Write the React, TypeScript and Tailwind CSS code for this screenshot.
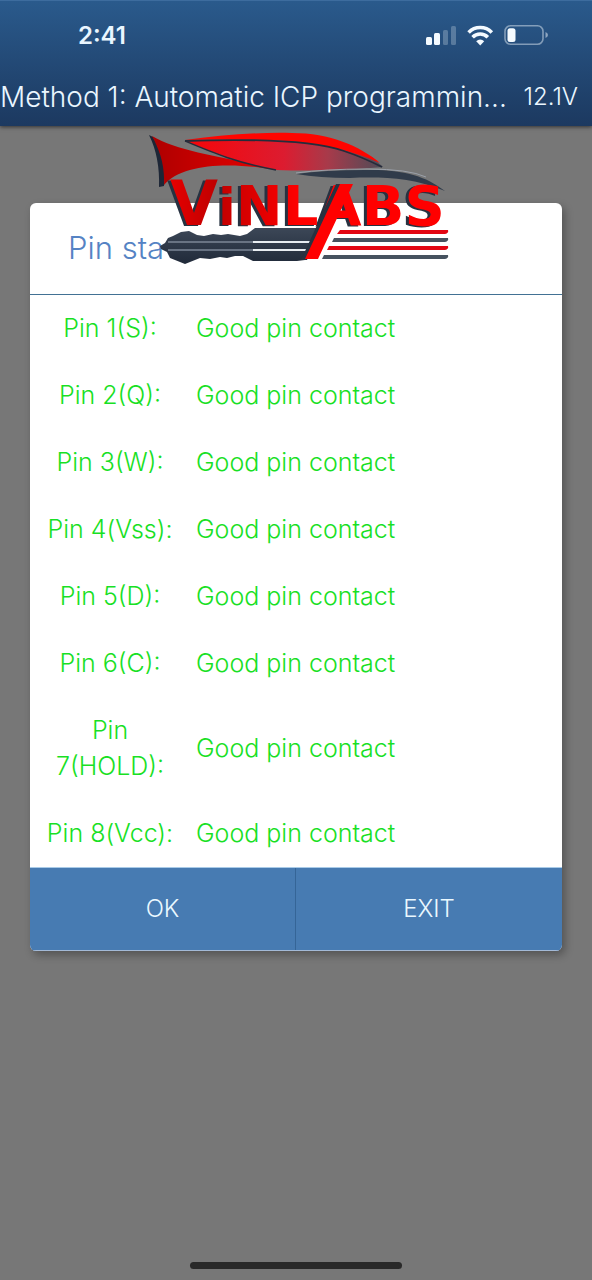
const pins = [
  { label: 'Pin 1(S):', status: 'Good pin contact' },
  { label: 'Pin 2(Q):', status: 'Good pin contact' },
  { label: 'Pin 3(W):', status: 'Good pin contact' },
  { label: 'Pin 4(Vss):', status: 'Good pin contact' },
  { label: 'Pin 5(D):', status: 'Good pin contact' },
  { label: 'Pin 6(C):', status: 'Good pin contact' },
  { label: 'Pin 7(HOLD):', status: 'Good pin contact' },
  { label: 'Pin 8(Vcc):', status: 'Good pin contact' },
];

function StatusIcons() {
  return (
    <svg width="124" height="24" viewBox="0 0 124 24" aria-hidden="true">
      <g fill="#f4faff">
        <rect x="0" y="13" width="6" height="8" rx="1.5" />
        <rect x="8" y="9" width="6" height="12" rx="1.5" />
        <rect x="17" y="6" width="5" height="15" rx="1.5" opacity=".25" />
        <rect x="25" y="2" width="5" height="19" rx="1.5" opacity=".25" />
      </g>
      <g fill="none" stroke="#f4faff" strokeWidth="3.6">
        <path d="M42.6 8.4a16.2 16.2 0 0 1 23.2 0" />
        <path d="M46.6 13.2a10.6 10.6 0 0 1 15.2 0" />
      </g>
      <path d="M54.2 21.4l-4-4.2a5.7 5.7 0 0 1 8 0z" fill="#f4faff" />
      <rect x="79" y="1.8" width="38" height="18.5" rx="5.5" fill="none" stroke="#f4faff" strokeOpacity=".45" strokeWidth="1.6" />
      <path d="M119.5 8v6q2.5-1 2.5-3t-2.5-3z" fill="#f4faff" opacity=".5" />
      <rect x="81.5" y="4.2" width="8" height="13.8" rx="2.5" fill="#f4faff" />
    </svg>
  );
}

function BrandLogo() {
  return (
    <svg
      className="pointer-events-none absolute top-[128px] left-1/2 -translate-x-1/2"
      width="310"
      height="140"
      viewBox="141 128 310 140"
      role="img"
      aria-label="ViNLABS"
    >
      <defs>
        <linearGradient id="tail" x1="0" x2="1">
          <stop offset="0" stopColor="#ae0000" />
          <stop offset=".55" stopColor="#d00000" />
          <stop offset="1" stopColor="#e60000" />
        </linearGradient>
        <linearGradient id="glass" x1="0" x2="1">
          <stop offset="0" stopColor="#f70508" />
          <stop offset=".5" stopColor="#dc1c30" />
          <stop offset=".72" stopColor="#a83a4a" />
          <stop offset="1" stopColor="#4c4c58" />
        </linearGradient>
        <linearGradient id="word" gradientUnits="userSpaceOnUse" x1="170" y1="0" x2="300" y2="0">
          <stop offset="0" stopColor="#e60000" />
          <stop offset=".35" stopColor="#c00000" />
          <stop offset="1" stopColor="#ff0000" />
        </linearGradient>
        <linearGradient id="steel" x1="0" x2="0" y1="0" y2="1">
          <stop offset="0" stopColor="#3c4757" />
          <stop offset="1" stopColor="#202a39" />
        </linearGradient>
      </defs>

      <path d="M149 135Q160 157 159 187l5-1q3-26-11-49z" fill="#1d2636" />
      <path d="M152 136C180 153 230 157 276 170C232 162 182 163 164 185C165 164 159 149 152 136Z" fill="url(#tail)" />

      <path d="M185 141C216 154 235 162 276 170Q330 172 383 167L372 157C320 138 250 138 185 141Z" fill="url(#glass)" />
      <path d="M185 141C216 154 235 162 276 170" fill="none" stroke="#252c3b" strokeWidth="1.5" />
      <path d="M185 140C220 135 260 132 292 133C330 133 360 146 380 163C350 149 310 141 265 140Q220 139 185 140Z" fill="#ff0500" />
      <path d="M185 141C240 139 308 139 344 151Q362 157 382 167" fill="none" stroke="#252c3b" strokeWidth="1.8" />
      <path d="M296 174Q325 170 365 170C400 169 425 175 445 191C412 177 380 177 350 178Q320 178 296 174Z" fill="#303b4a" />
      <path d="M296 173Q325 169 367 169T426 177" fill="none" stroke="#9ba1aa" strokeWidth="1" />

      <path
        d="M160 246l5-3 3-5 5-2 8-4 8-1 8 4 7 1 9-2 8 1 7-1 12 2 7-2 8-6h66l-16 32-8 1h-44l-10-5-8 0-8 2-7-1-10 2-10-1-15 6-15-6-3-6-6-3z"
        fill="url(#steel)"
      />
      <path d="M168 242h87M168 250h87" stroke="#7c8797" strokeWidth="1.5" />
      <path d="M253 242h62M253 250h58" stroke="#e8edf2" strokeWidth="2" />

      <path d="M340 230h108q1 3-3 4H337z" fill="#e30613" />
      <path d="M334 238h114q1 3-3 4H332z" fill="#46525f" />
      <path d="M329 246h119q1 3-3 4H327z" fill="#e30613" />
      <path d="M324 255h124q1 3-3 4H322z" fill="#46525f" />

      <text
        className="drop-shadow-[-3px_1px_0px_#273241]"
        x="170"
        y="225"
        fill="url(#word)"
        fontFamily="DejaVu Sans"
        fontWeight="700"
        fontSize="56"
      >
        <tspan fontSize="62">V</tspan>
        <tspan fontSize="52">i</tspan>
        <tspan>NLABS</tspan>
      </text>
      <path d="M336 184L301 260h6l35-76z" fill="#273241" />
      <path d="M340 184h13L318 259h-13z" fill="#ff0000" />
    </svg>
  );
}

export default function App() {
  return (
    <div className="relative flex min-h-screen flex-col bg-[#777777] font-['Inter',sans-serif]">
      <header className="border-t border-[#3d6c9e] bg-linear-to-b from-[#2a5a8c] to-[#1c3960] text-[#eaf6ff] shadow-[0_1px_4px_rgba(0,0,0,0.6)]">
        <div className="flex h-[70px] items-center justify-between pr-[42px] pl-[78px]">
          <time className="text-2xl font-semibold">2:41</time>
          <StatusIcons />
        </div>
        <div className="flex h-[55px] items-center justify-between pr-[14px] pb-[3px]">
          <h1 className="text-[28px] font-[350] whitespace-nowrap">Method 1: Automatic ICP programmin...</h1>
          <span className="text-2xl font-light">12.1V</span>
        </div>
      </header>

      <main
        role="dialog"
        aria-labelledby="dialog-title"
        className="mx-[30px] mt-[77px] overflow-hidden rounded-md bg-white shadow-[3px_4px_8px_rgba(0,0,0,0.3)]"
      >
        <h2
          id="dialog-title"
          className="flex h-[92px] items-center border-b border-[#427194] pl-[38px] text-[31px] font-[350] text-[#5583c4]"
        >
          Pin sta
        </h2>
        <table className="w-full table-fixed text-[25px] leading-9 font-[350] text-[#18e024]">
          <tbody>
            {pins.map((pin) => (
              <tr key={pin.label}>
                <th scope="row" className="w-[160px] px-3 pt-[15px] pb-4 text-center font-[350]">
                  {pin.label}
                </th>
                <td className="pt-[15px] pb-4 pl-[6px]">{pin.status}</td>
              </tr>
            ))}
          </tbody>
        </table>
        <div className="grid grid-cols-2 border-t border-b border-t-[#a9cbe8] border-b-[#a3b9d6] bg-[#477bb2] text-2xl font-light text-[#eaf8ff]">
          <button type="button" className="h-[82px] border-r border-[#356597]">OK</button>
          <button type="button" className="h-[82px]">EXIT</button>
        </div>
      </main>

      <BrandLogo />

      <footer className="mt-auto flex justify-center pt-8 pb-[11px]">
        <div className="h-[7px] w-[212px] rounded-full bg-[#292929]" />
      </footer>
    </div>
  );
}
